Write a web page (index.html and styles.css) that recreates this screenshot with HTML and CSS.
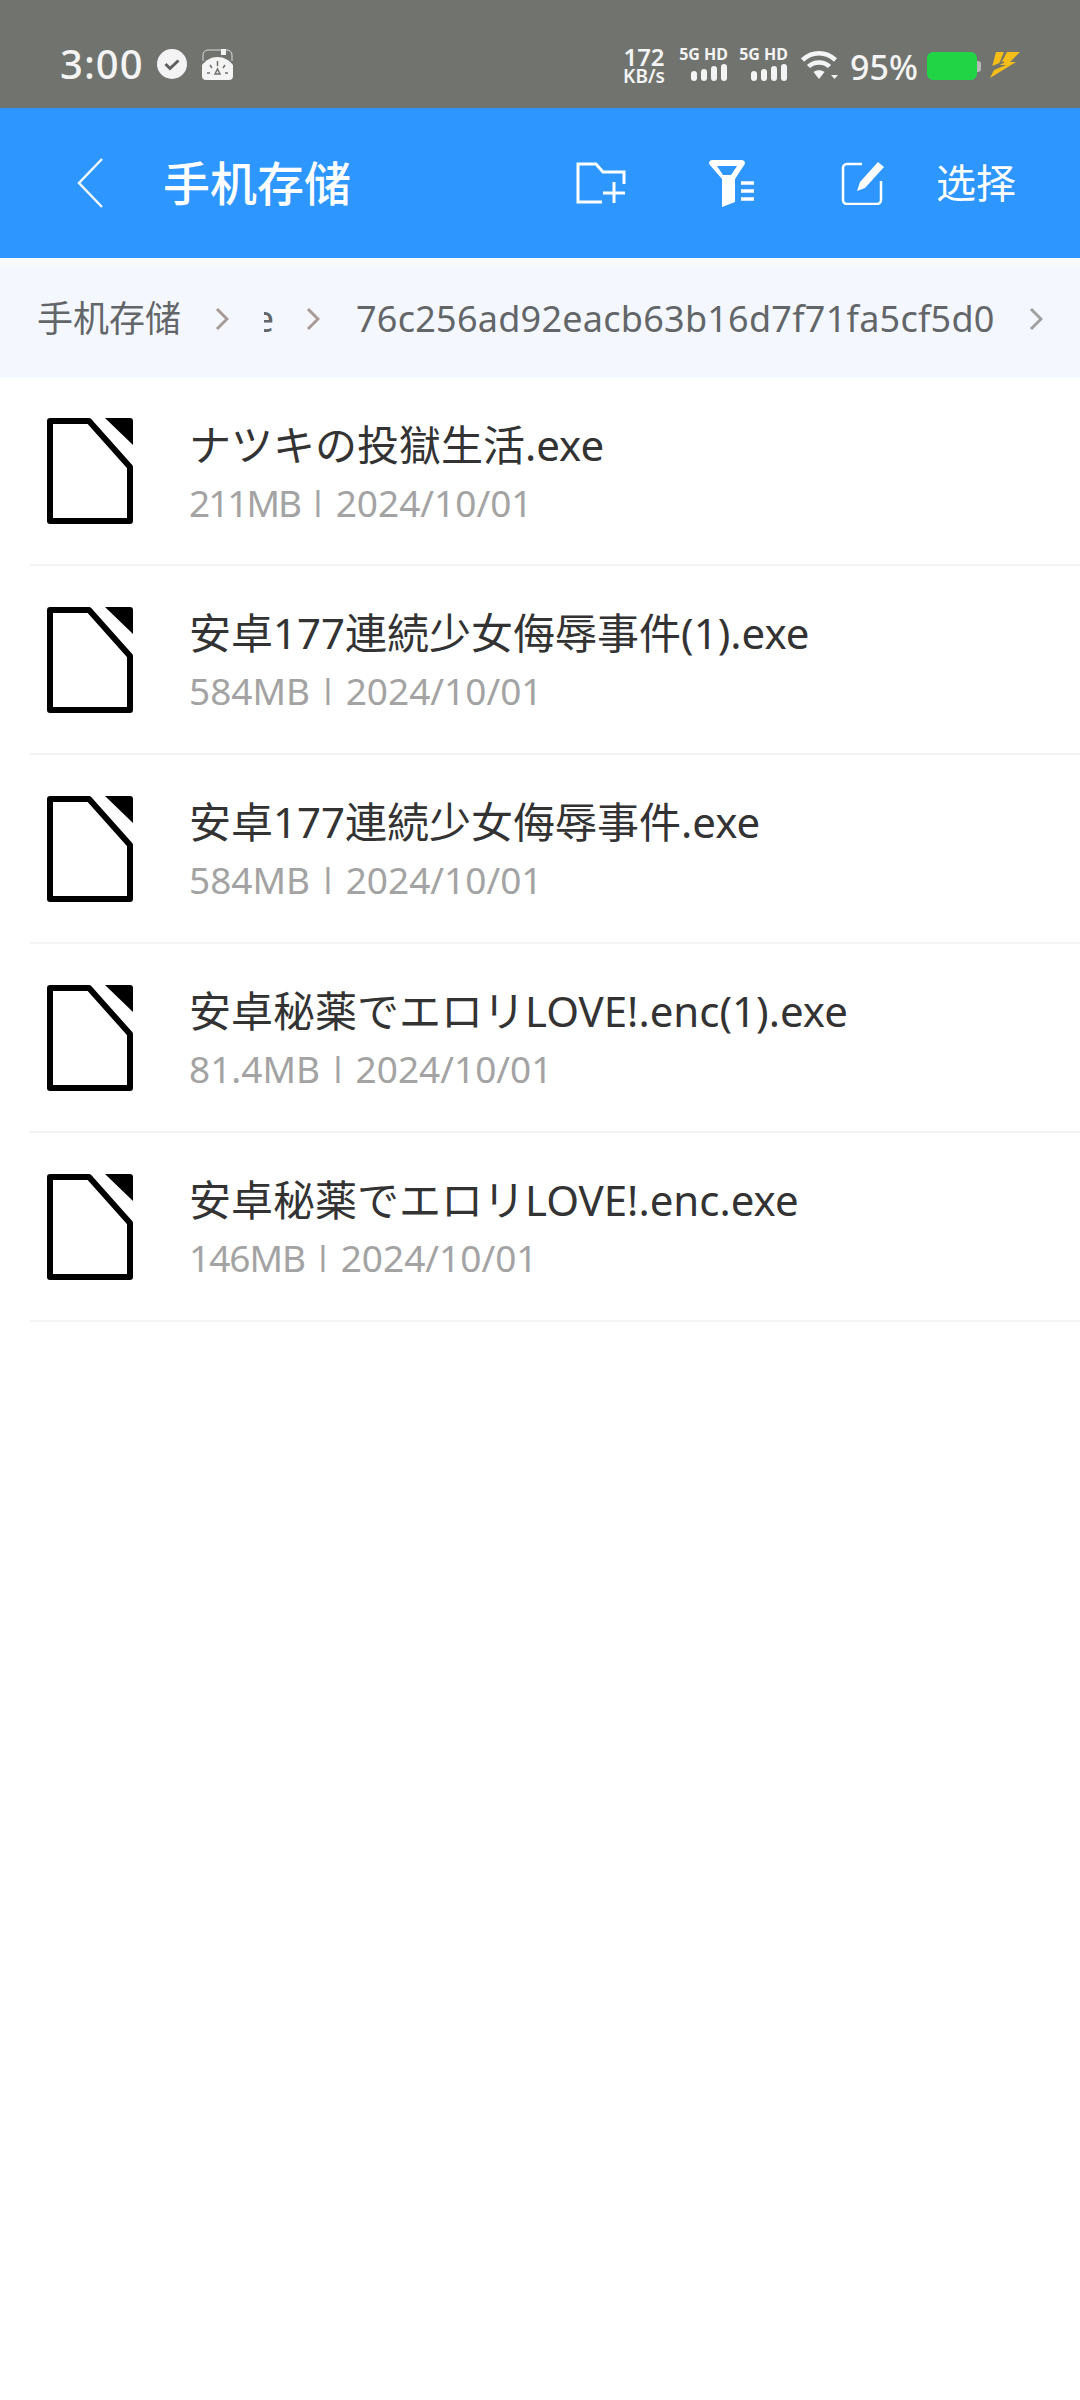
FILE: index.html
```html
<!DOCTYPE html>
<html lang="zh-CN">
    <head>
        <meta charset="utf-8">
        <title>手机存储</title>
        <link rel="stylesheet" href="styles.css">
    </head>
    <body>
        <div class="statusBar">
            <div class="statusLeft">
                <span class="clock">3:00</span>
                <svg class="statusIcon" width="30" height="30" viewBox="0 0 30 30"><circle cx="15" cy="15" r="15" fill="#f4f4f4"/><path d="M8.5 15l4.5 4.5 8.5-8" fill="none" stroke="#5d605c" stroke-width="3"/></svg>
                <svg class="statusIcon gauge" width="31" height="31" viewBox="0 0 31 31"><path d="M1 12V6a5 5 0 0 1 5-5h19a5 5 0 0 1 5 5v6" fill="none" stroke="#dcdcdc" stroke-width="1"/><rect x="19" y="0" width="5" height="6" fill="#f4f4f4"/><path d="M0 27V16C4 11 9 8 15.500 8S27 11 31 16v11a4 4 0 0 1-4 4H4a4 4 0 0 1-4-4z" fill="#f4f4f4"/><path d="M15.500 12v5M8 16l2 3M23 16l-2 3M5 24h3M23 24h3M13 25l2.500-5 2.500 5z" stroke="#70736e" stroke-width="1.500" fill="none"/></svg>
            </div>
            <div class="statusRight">
                <div class="speed"><span class="speedNum">172</span><span class="speedUnit">KB/s</span></div>
                <div class="signal">
                    <span class="signalText">5G HD</span>
                    <svg width="37" height="17" viewBox="0 0 37 17"><rect x="0" y="7" width="6" height="10" rx="3" fill="#f4f4f4"/><rect x="10" y="5" width="6" height="12" rx="3" fill="#f4f4f4"/><rect x="20" y="2" width="6" height="15" rx="3" fill="#f4f4f4"/><rect x="30" y="0" width="6" height="17" rx="3" fill="#f4f4f4"/></svg>
                </div>
                <div class="signal">
                    <span class="signalText">5G HD</span>
                    <svg width="37" height="17" viewBox="0 0 37 17"><rect x="0" y="7" width="6" height="10" rx="3" fill="#f4f4f4"/><rect x="10" y="5" width="6" height="12" rx="3" fill="#f4f4f4"/><rect x="20" y="2" width="6" height="15" rx="3" fill="#f4f4f4"/><rect x="30" y="0" width="6" height="17" rx="3" fill="#f4f4f4"/></svg>
                </div>
                <svg class="wifi" width="37" height="30" viewBox="0 0 37 30"><path d="M1.500 10C11 1 25 1 34.500 10M7.500 16.500C13 11 23 11 28.500 16.500" fill="none" stroke="#f4f4f4" stroke-width="4.500"/><path d="M12.500 22c3-2.500 8-2.500 11 0L18 29z" fill="#f4f4f4"/><path d="M30 25h7l-3.500 4z" fill="#f4f4f4"/></svg>
                <span class="battery">95%</span>
                <div class="batteryIcon"><div class="batteryFill"></div><div class="batteryNub"></div></div>
                <svg class="bolt" width="30" height="27" viewBox="0 0 30 27"><path d="M6 1h8L9 13l-7 3z" fill="#f5bd17"/><path d="M17 1h13L20 11h6L0 27l4-8 12-5h-6z" fill="#f5bd17"/><path d="M2 16l12-5" stroke="#70736e" stroke-width="1.500"/></svg>
            </div>
        </div>

        <div class="header">
            <svg class="backIcon" width="26" height="50" viewBox="0 0 26 50"><path d="M25 1L2 25l23 24" fill="none" stroke="#f2f8ff" stroke-width="2.500"/></svg>
            <h1 class="headerTitle">手机存储</h1>
            <svg class="folderIcon" width="50" height="42" viewBox="0 0 50 42"><path d="M26 40H2V2h18l7 8h21v12" fill="none" stroke="#fff" stroke-width="3"/><path d="M38 20v21M27 31h22" fill="none" stroke="#fff" stroke-width="3"/></svg>
            <svg class="filterIcon" width="48" height="50" viewBox="0 0 48 50"><path d="M5 2h30a3 3 0 0 1 2.500 4.500L28 21v23l-13 5V21L2.500 6.500A3 3 0 0 1 5 2z" fill="#fff"/><path d="M10 8h20l-6 9h-8z" fill="#2d97ff"/><path d="M34 25h13M34 33h13M34 41h13" stroke="#fff" stroke-width="3.500"/></svg>
            <svg class="editIcon" width="44" height="44" viewBox="0 0 44 44"><path d="M21 3H6a4 4 0 0 0-4 4v32a4 4 0 0 0 4 4h30a4 4 0 0 0 4-4V20" fill="none" stroke="#fff" stroke-width="2.500"/><path d="M37 1l6 5-19 21-8 3 3-9z" fill="#fff"/></svg>
            <span class="selectText">选择</span>
        </div>

        <div class="crumbBar">
            <span class="crumb">手机存储</span>
            <svg class="crumbArrow" width="14" height="24" viewBox="0 0 14 24"><path d="M2 2l10 10L2 22" fill="none" stroke="#a89a96" stroke-width="3"/></svg>
            <span class="crumbClipped"><span class="crumb">e</span></span>
            <svg class="crumbArrow arrowNear" width="14" height="24" viewBox="0 0 14 24"><path d="M2 2l10 10L2 22" fill="none" stroke="#a89a96" stroke-width="3"/></svg>
            <span class="crumb crumbLong">76c256ad92eacb63b16d7f71fa5cf5d0</span>
            <svg class="crumbArrow" width="14" height="24" viewBox="0 0 14 24"><path d="M2 2l10 10L2 22" fill="none" stroke="#a0a0a0" stroke-width="3"/></svg>
        </div>

        <div class="fileList">
            <div class="fileRow">
                <svg class="fileIcon" width="86" height="106" viewBox="0 0 86 106"><path d="M3 3h39l41 46v54H3z" fill="none" stroke="#000" stroke-width="6" stroke-linejoin="round"/><path d="M58 0h25a3 3 0 0 1 3 3v24z" fill="#000"/></svg>
                <div class="fileText">
                    <p class="fileName">ナツキの投獄生活.exe</p>
                    <p class="fileMeta"><span class="sizeTight">211MB</span> <span class="metaSep">|</span> 2024/10/01</p>
                </div>
            </div>
            <div class="fileRow">
                <svg class="fileIcon" width="86" height="106" viewBox="0 0 86 106"><path d="M3 3h39l41 46v54H3z" fill="none" stroke="#000" stroke-width="6" stroke-linejoin="round"/><path d="M58 0h25a3 3 0 0 1 3 3v24z" fill="#000"/></svg>
                <div class="fileText">
                    <p class="fileName">安卓177連続少女侮辱事件(1).exe</p>
                    <p class="fileMeta">584MB <span class="metaSep">|</span> 2024/10/01</p>
                </div>
            </div>
            <div class="fileRow">
                <svg class="fileIcon" width="86" height="106" viewBox="0 0 86 106"><path d="M3 3h39l41 46v54H3z" fill="none" stroke="#000" stroke-width="6" stroke-linejoin="round"/><path d="M58 0h25a3 3 0 0 1 3 3v24z" fill="#000"/></svg>
                <div class="fileText">
                    <p class="fileName">安卓177連続少女侮辱事件.exe</p>
                    <p class="fileMeta">584MB <span class="metaSep">|</span> 2024/10/01</p>
                </div>
            </div>
            <div class="fileRow">
                <svg class="fileIcon" width="86" height="106" viewBox="0 0 86 106"><path d="M3 3h39l41 46v54H3z" fill="none" stroke="#000" stroke-width="6" stroke-linejoin="round"/><path d="M58 0h25a3 3 0 0 1 3 3v24z" fill="#000"/></svg>
                <div class="fileText">
                    <p class="fileName">安卓秘薬でエロリLOVE!.enc(1).exe</p>
                    <p class="fileMeta">81.4MB <span class="metaSep">|</span> 2024/10/01</p>
                </div>
            </div>
            <div class="fileRow">
                <svg class="fileIcon" width="86" height="106" viewBox="0 0 86 106"><path d="M3 3h39l41 46v54H3z" fill="none" stroke="#000" stroke-width="6" stroke-linejoin="round"/><path d="M58 0h25a3 3 0 0 1 3 3v24z" fill="#000"/></svg>
                <div class="fileText">
                    <p class="fileName">安卓秘薬でエロリLOVE!.enc.exe</p>
                    <p class="fileMeta"><span class="sizeSlight">146MB</span> <span class="metaSep">|</span> 2024/10/01</p>
                </div>
            </div>
        </div>
    </body>
</html>
```

FILE: styles.css
```css
* {
    margin: 0;
    padding: 0;
    box-sizing: border-box;
    font-family: "Noto Sans", "Noto Sans CJK SC", sans-serif;
}
body {
    width: 1080px;
    height: 2400px;
    background-color: #fff;
    overflow: hidden;
}
svg {
    display: block;
    flex-shrink: 0;
}
.statusBar {
    height: 108px;
    background-color: #70736e;
    color: #f4f4f4;
    display: flex;
    justify-content: space-between;
    padding: 44px 60px 0 60px;
}
.statusLeft {
    display: flex;
    align-items: flex-start;
    height: 40px;
}
.clock {
    font-size: 40px;
    font-weight: 500;
    line-height: 40px;
    width: 77px;
    letter-spacing: 1px;
    white-space: nowrap;
}
.statusIcon {
    margin-top: 5px;
    margin-left: 20px;
}
.gauge {
    margin-left: 15px;
}
.statusRight {
    display: flex;
    align-items: flex-start;
}
.speed {
    width: 44px;
    margin-right: 13px;
    display: flex;
    flex-direction: column;
    align-items: center;
    font-weight: 600;
}
.speedNum {
    font-size: 24px;
    line-height: 20px;
    margin-top: 3px;
}
.speedUnit {
    font-size: 19px;
    line-height: 15px;
    margin-top: 2px;
    white-space: nowrap;
}
.signal {
    width: 49px;
    margin-right: 11px;
    display: flex;
    flex-direction: column;
    align-items: flex-end;
}
.signalText {
    font-size: 16px;
    font-weight: 700;
    line-height: 16px;
    margin-top: 2px;
    margin-bottom: 2px;
    white-space: nowrap;
}
.wifi {
    margin-top: 6px;
    margin-left: 2px;
    margin-right: 12px;
}
.battery {
    font-size: 34px;
    font-weight: 500;
    line-height: 40px;
    margin-top: 3px;
    width: 67px;
    white-space: nowrap;
}
.batteryIcon {
    display: flex;
    align-items: center;
    margin-top: 8px;
    margin-left: 10px;
}
.batteryFill {
    width: 50px;
    height: 28px;
    border-radius: 6px;
    background-color: #20d445;
}
.batteryNub {
    width: 4px;
    height: 11px;
    border-radius: 0 3px 3px 0;
    background-color: #b8b8b8;
}
.bolt {
    margin-top: 7px;
    margin-left: 9px;
}
.header {
    height: 150px;
    background-color: #2d97ff;
    display: flex;
    align-items: center;
    padding-left: 77px;
    color: #fff;
}
.backIcon {
    margin-right: 60px;
}
.headerTitle {
    font-size: 47px;
    font-weight: 500;
    line-height: 50px;
    width: 413px;
    white-space: nowrap;
}
.folderIcon {
    margin-right: 81px;
}
.filterIcon {
    margin-right: 86px;
}
.editIcon {
    margin-right: 51px;
}
.selectText {
    font-size: 40px;
    line-height: 50px;
}
.crumbBar {
    height: 120px;
    background-color: #f4f8fe;
    border-top: 10px solid #f7f9fa;
    display: flex;
    align-items: center;
    padding-left: 37px;
    padding-bottom: 8px;
}
.crumb {
    font-size: 36px;
    color: #636668;
    line-height: 44px;
    white-space: nowrap;
}
.crumbArrow {
    margin-left: 34px;
}
.arrowNear {
    margin-left: 32px;
}
.crumbClipped {
    width: 10px;
    overflow: hidden;
    direction: rtl;
    margin-left: 35px;
    display: block;
}
.crumbLong {
    margin-left: 36px;
    letter-spacing: 0.25px;
}
.fileRow {
    height: 189px;
    margin-left: 30px;
    padding-left: 17px;
    border-bottom: 2px solid #f3f3f3;
    display: flex;
    align-items: center;
}
.fileRow:first-child {
    height: 188px;
}
.fileIcon {
    margin-right: 56px;
}
.fileText {
    padding-top: 5px;
}
.fileName {
    font-size: 42px;
    color: #333;
    line-height: 56px;
    white-space: nowrap;
}
.fileMeta {
    font-size: 37px;
    color: #a3a3a3;
    line-height: 48px;
    margin-top: 6px;
    white-space: nowrap;
}
.metaSep {
    font-size: 26px;
    font-weight: 700;
    position: relative;
    top: -6px;
    margin: 0 1px;
}
.sizeTight {
    letter-spacing: -2px;
}
.sizeSlight {
    letter-spacing: -1px;
}
```
